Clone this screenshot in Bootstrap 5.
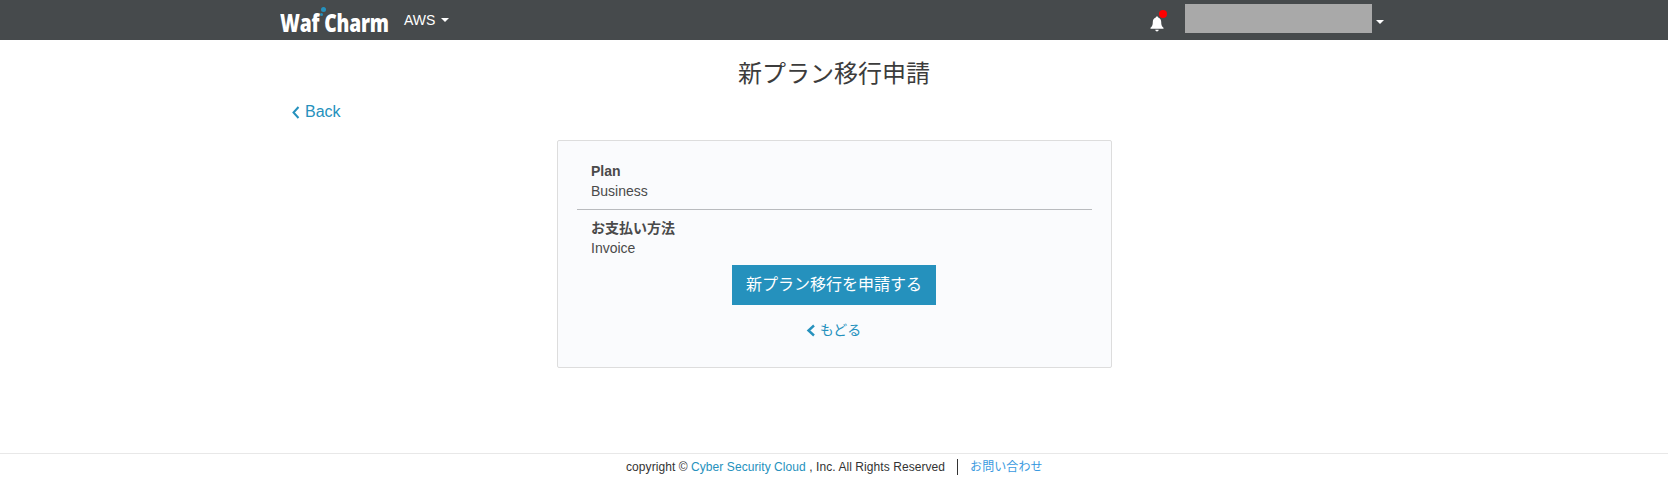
<!DOCTYPE html>
<html lang="ja">
<head>
<meta charset="utf-8">
<title>新プラン移行申請</title>
<link href="https://cdn.jsdelivr.net/npm/bootstrap@5.3.0/dist/css/bootstrap.min.css" rel="stylesheet">
<style>
html,body{height:478px;overflow:hidden}
body{font-family:"Liberation Sans","Noto Sans CJK JP",sans-serif;color:#444;background:#fff;display:flex;flex-direction:column}
a{text-decoration:none;color:#2591bd}
.topbar{height:40px;background:#464a4c;padding:0 0 0 280px;flex:none}
.logo-box{position:relative;width:109px;height:24px;margin-top:6px;flex:none}
.logo-word{font-family:"Open Sans",sans-serif;font-weight:800;font-size:24px;color:#fff;line-height:24px;display:block;white-space:nowrap;transform:scaleX(.8);transform-origin:left center;letter-spacing:-.2px}
.logo-dot{position:absolute;left:41px;top:-4px;width:5px;height:5px;border-radius:50%;background:#2591bd}
.logo-dot2{position:absolute;left:40px;top:2px;width:3px;height:3px;border-radius:50%;background:#2591bd}
.acct{color:#fff;font-size:14px;margin-left:15px;gap:2px}
.caret-mark{display:inline-block;border-top:4px solid #fff;border-left:4px solid transparent;border-right:4px solid transparent;vertical-align:middle}
.bell-wrap{position:relative;width:16px;height:18px;margin-left:auto;margin-right:20px}
.bell-dot{position:absolute;left:10px;top:-1px;width:8px;height:8px;border-radius:50%;background:#f00}
.masked{width:187px;height:29px;background:#a9a9a9;margin-right:4px;margin-bottom:4px}
.user-side{margin-right:284px}
.user-side .caret-mark{margin-top:3px}
.page-title{font-size:24px;font-weight:400;color:#3c3c3c;text-align:center;margin:19px 0 0;line-height:30px}
.back-row{padding-left:291px;margin-top:11px;font-size:16px;line-height:24px}
.panel-box{width:555px;height:228px;margin:16px 0 0 557px;background:#fafbfd;border:1px solid #ddd;border-radius:2px;padding:20px 19px 0}
.pair{padding-left:14px;font-size:14px;line-height:20px;color:#4a4a4a}
.pair b{display:block;color:#4a4a4a}
.rule-line{border-top:1px solid #b9bbbe;margin:8px 0 8px}
.go-btn{background:#2591bd;color:#fff;font-size:16px;font-weight:400;border-radius:0;border:0;width:204px;height:40px;padding:0;display:block;margin:7px 0 0 155px}
.go-btn:hover{background:#2591bd;color:#fff}
.back-jp{font-size:14px;margin-top:15px;line-height:20px;padding-right:2px}
.foot{margin-top:auto;height:25px;border-top:1px solid #e8e8e8;font-size:12px;letter-spacing:.07px;color:#333;flex:none;padding:2px 0 0 626px;display:flex;align-items:center}
.foot .sep{display:inline-block;width:1px;height:16px;background:#333;margin:0 12px}
.foot .contact{color:#3a9ae0}
</style>
</head>
<body>
<nav class="topbar d-flex align-items-center">
  <div class="logo-box"><span class="logo-word">Waf Charm</span><span class="logo-dot"></span><span class="logo-dot2"></span></div>
  <a href="#" class="acct d-flex align-items-center">AWS <span class="caret-mark ms-1"></span></a>
  <div class="bell-wrap">
    <svg width="16" height="18" viewBox="0 0 16 18"><path d="M8 1.500c-.8 0-1.200.5-1.200 1.100C4.700 3.200 3.800 5 3.800 7c0 3-.6 4.300-2.300 5.800v1h13v-1C12.800 11.300 12.200 10 12.200 7c0-2-.9-3.800-3-4.400C9.200 2 8.800 1.500 8 1.500zM6.300 14.800c.1 1 .8 1.700 1.700 1.700s1.600-.7 1.700-1.700z" fill="#fff"/></svg>
    <span class="bell-dot"></span>
  </div>
  <div class="user-side d-flex align-items-center">
    <div class="masked"></div>
    <span class="caret-mark"></span>
  </div>
</nav>
<h1 class="page-title">新プラン移行申請</h1>
<div class="back-row d-flex">
  <a href="#" class="d-flex align-items-center"><svg width="10" height="13" viewBox="0 0 10 13" class="me-1"><path d="M7.500 1 2.500 6.500l5 5.500" fill="none" stroke="#2591bd" stroke-width="2"/></svg>Back</a>
</div>
<div class="panel-box">
  <div class="pair"><b>Plan</b>Business</div>
  <div class="rule-line"></div>
  <div class="pair"><b>お支払い方法</b>Invoice</div>
  <button class="btn go-btn" type="button">新プラン移行を申請する</button>
  <div class="back-jp d-flex justify-content-center"><a href="#" class="d-flex align-items-center"><svg width="10" height="13" viewBox="0 0 10 13" class="me-1"><path d="M8 1.500 2.500 6.500 8 11.500" fill="none" stroke="#2591bd" stroke-width="2.400"/></svg>もどる</a></div>
</div>
<footer class="foot">
  <span>copyright ©&nbsp;<a href="#">Cyber Security Cloud</a>&nbsp;, Inc. All Rights Reserved</span>
  <span class="sep"></span>
  <a href="#" class="contact">お問い合わせ</a>
</footer>
</body>
</html>
